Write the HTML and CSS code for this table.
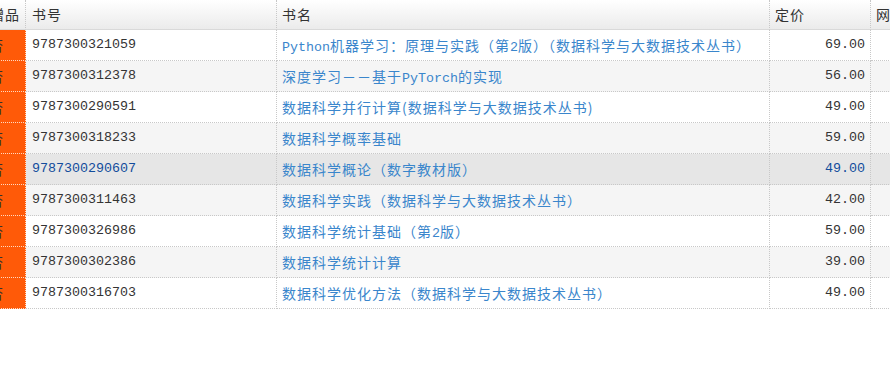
FILE: index.html
```html
<!DOCTYPE html>
<html lang="zh-CN">
<head>
<meta charset="utf-8">
<title>书目列表</title>
<link rel="stylesheet" href="styles.css">
</head>
<body>
<div class="grid-wrap">
<table class="grid">
<colgroup>
<col class="c-flag"><col class="c-isbn"><col class="c-title"><col class="c-price"><col class="c-shop">
</colgroup>
<thead>
<tr>
<th class="flag">是否赠品</th><th class="isbn">书号</th><th>书名</th><th>定价</th><th>网店价</th>
</tr>
</thead>
<tbody>
<tr><td class="flag">否</td><td class="isbn num">9787300321059</td><td class="title"><span class="lat">Python</span>机器学习：原理与实践（第<span class="lat">2</span>版）（数据科学与大数据技术丛书）</td><td class="price num">69.00</td><td></td></tr>
<tr class="alt"><td class="flag">否</td><td class="isbn num">9787300312378</td><td class="title">深度学习－－基于<span class="lat">PyTorch</span>的实现</td><td class="price num">56.00</td><td></td></tr>
<tr><td class="flag">否</td><td class="isbn num">9787300290591</td><td class="title">数据科学并行计算(数据科学与大数据技术丛书)</td><td class="price num">49.00</td><td></td></tr>
<tr class="alt"><td class="flag">否</td><td class="isbn num">9787300318233</td><td class="title">数据科学概率基础</td><td class="price num">59.00</td><td></td></tr>
<tr class="hover"><td class="flag">否</td><td class="isbn num">9787300290607</td><td class="title">数据科学概论（数字教材版）</td><td class="price num">49.00</td><td></td></tr>
<tr class="alt"><td class="flag">否</td><td class="isbn num">9787300311463</td><td class="title">数据科学实践（数据科学与大数据技术丛书）</td><td class="price num">42.00</td><td></td></tr>
<tr><td class="flag">否</td><td class="isbn num">9787300326986</td><td class="title">数据科学统计基础（第<span class="lat">2</span>版）</td><td class="price num">59.00</td><td></td></tr>
<tr class="alt"><td class="flag">否</td><td class="isbn num">9787300302386</td><td class="title">数据科学统计计算</td><td class="price num">39.00</td><td></td></tr>
<tr><td class="flag">否</td><td class="isbn num">9787300316703</td><td class="title">数据科学优化方法（数据科学与大数据技术丛书）</td><td class="price num">49.00</td><td></td></tr>
</tbody>
</table>
</div>
</body>
</html>
```
FILE: styles.css
```css
html, body {
  margin: 0;
  padding: 0;
  background: #fff;
}
.grid-wrap {
  width: 890px;
  height: 366px;
  overflow: hidden;
}
.grid {
  margin-left: -45px;
  border-collapse: separate;
  border-spacing: 0;
  table-layout: fixed;
  width: 1010px;
  font-family: "Noto Sans CJK SC", "Noto Sans", sans-serif;
  font-size: 14px;
  letter-spacing: 1px;
  color: #333;
}
.c-flag { width: 71px; }
.c-isbn { width: 251px; }
.c-title { width: 493px; }
.c-price { width: 101px; }
.c-shop { width: 94px; }

.grid th, .grid td {
  padding: 0 5px;
  white-space: nowrap;
  overflow: hidden;
  text-align: left;
  border-right: 1px dotted #c8c8c8;
  border-bottom: 1px dotted #c8c8c8;
}
.grid th {
  height: 29px;
  line-height: 29px;
  font-weight: normal;
  background: linear-gradient(#ffffff, #ebebeb);
  border-bottom: 1px solid #d9d9d9;
  color: #333;
}
.grid td {
  height: 30px;
  line-height: 30px;
  background: #fff;
}
.grid tr.alt td { background: #f5f5f5; }
.grid tr.hover td { background: #e6e6e6; }

.grid th.flag {
  text-align: right;
  padding-right: 7px;
}
.grid td.flag {
  background: #ff5a08;
  text-align: right;
  padding-right: 21px;
  color: #333;
  border-right: 1px dotted #ffd9c2;
  border-bottom: 1px dotted #ffd9c2;
}
.grid tr.alt td.flag, .grid tr.hover td.flag { background: #ff5a08; }

.grid .isbn { padding-left: 6px; }
.num, .lat {
  font-family: "Liberation Mono", monospace;
  font-size: 13.33px;
  letter-spacing: 0;
}
.lat {
  line-height: 1;
}
.grid td.title { color: #3a86cc; }
.grid td.price {
  text-align: right;
  padding-right: 5px;
}
.grid tr.hover td.isbn, .grid tr.hover td.price { color: #124c9c; }
```
